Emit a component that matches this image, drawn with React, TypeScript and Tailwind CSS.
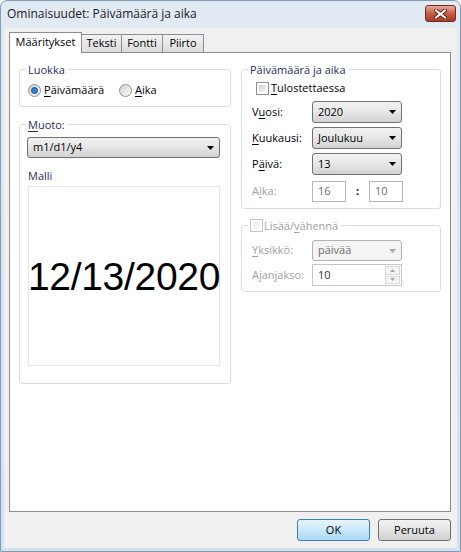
import React from 'react';

const U = ({ children }: { children: React.ReactNode }) => <span className="underline underline-offset-[2px]">{children}</span>;

const Radio = ({ checked }: { checked?: boolean }) => (
    <span className="w-[13px] h-[13px] rounded-full border border-[#8e8f8f] bg-linear-to-br from-[#d2d2d2] to-[#fcfcfc] flex items-center justify-center shrink-0">
        {checked && <span className="w-[7px] h-[7px] rounded-full border border-[#1b4f86] bg-[#2f86d8]" />}
    </span>
);

const Check = ({ disabled }: { disabled?: boolean }) => (
    disabled ? (
        <span className="w-[13px] h-[13px] border border-[#c4c4c4] bg-white p-[2px] shrink-0">
            <span className="block w-full h-full bg-linear-to-br from-[#ebebeb] to-[#fafafa]" />
        </span>
    ) : (
        <span className="w-[13px] h-[13px] border border-[#8e8f8f] bg-white p-[2px] shrink-0">
            <span className="block w-full h-full bg-linear-to-br from-[#cfcfcf] to-[#f7f7f7]" />
        </span>
    )
);

const Arrow = ({ color }: { color: string }) => (
    <svg width="7" height="4" viewBox="0 0 7 4" className="shrink-0">
        <polygon points="0,0 7,0 3.5,4" fill={color} />
    </svg>
);

const Combo = ({ value, className }: { value: string, className: string }) => (
    <div className={className + " flex items-center pl-[5px] pr-[5px] rounded-[3px] border border-[#707070] bg-linear-to-b from-[#f2f2f2] via-[#e6e6e6] to-[#d2d2d2]"}>
        <span className="flex-1">{value}</span>
        <Arrow color="#000" />
    </div>
);

const GroupBox = ({ legend, className, children }: { legend: React.ReactNode, className: string, children?: React.ReactNode }) => (
    <div className={className + " relative border border-[#d5dfe5] rounded-[3px]"}>
        <div className="absolute left-[6px] -top-[8px] bg-white px-[2px] leading-[15px] flex items-center">{legend}</div>
        {children}
    </div>
);

const DisabledInput = ({ value }: { value: string }) => (
    <div className="w-[34px] h-[21px] border border-[#b8b8b8] bg-white flex items-center pl-[5px] text-[#6d6d6d]">{value}</div>
);

const Row = ({ label, children, className }: { label: React.ReactNode, children: React.ReactNode, className: string }) => (
    <div className={className + " flex items-center"}>
        <div className="w-[60px]">{label}</div>
        {children}
    </div>
);

export default function App() {
    return (
        <div className="w-[461px] h-[552px] flex flex-col rounded-t-[7px] border border-[#7f9db9] bg-linear-to-b from-[#e2eaf3] to-[#d3e0ee] font-['Segoe_UI','Open_Sans',sans-serif] text-[11px] text-black">
            <div className="h-[27px] shrink-0 flex pl-[6px] pr-[4px]">
                <span className="text-[12px] leading-[26px] text-[#1b1b1b]">Ominaisuudet: Päivämäärä ja aika</span>
                <div className="ml-auto mt-[4px] w-[31px] h-[17px] rounded-[3px] border border-[#6f2b20] bg-linear-to-b from-[#e9a99a] via-[#c85c44] to-[#a83a22] flex items-center justify-center">
                    <svg width="13" height="10" viewBox="0 0 13 10">
                        <path d="M2 1.5 L11 8.5 M11 1.5 L2 8.5" stroke="#5a2418" strokeWidth="4" strokeLinecap="square" />
                        <path d="M2 1.5 L11 8.5 M11 1.5 L2 8.5" stroke="#fff" strokeWidth="2" strokeLinecap="square" />
                    </svg>
                </div>
            </div>
            <div className="flex-1 mx-[3px] mb-[3px] bg-[#f0f0f0] flex flex-col">
                <div className="flex items-end h-[24px] pl-[5px] pt-[4px]">
                    <div className="w-[73px] h-[21px] -mb-[1px] relative z-10 bg-white border border-b-0 border-[#898c95] flex items-center justify-center pb-[2px]">Määritykset</div>
                    <div className="w-[40px] h-[18px] border-t border-r border-[#898c95] bg-linear-to-b from-[#f2f2f2] to-[#dddddd] flex items-center justify-center">Teksti</div>
                    <div className="w-[41px] h-[18px] border-t border-r border-[#898c95] bg-linear-to-b from-[#f2f2f2] to-[#dddddd] flex items-center justify-center">Fontti</div>
                    <div className="w-[41px] h-[18px] border-t border-r border-[#898c95] bg-linear-to-b from-[#f2f2f2] to-[#dddddd] flex items-center justify-center">Piirto</div>
                </div>
                <div className="ml-[5px] w-[442px] h-[460px] border border-[#898c95] bg-white flex gap-[10px] pl-[9px] pt-[16px]">
                    <div className="w-[212px] flex flex-col">
                        <GroupBox className="h-[38px]" legend={<span className="text-[#1e2f57]">Luokka</span>}>
                            <div className="mt-[13px] pl-[8px] h-[15px] flex items-center">
                                <div className="w-[91px] flex items-center gap-[3px]">
                                    <Radio checked />
                                    <span><U>P</U>äivämäärä</span>
                                </div>
                                <div className="flex items-center gap-[3px]">
                                    <Radio />
                                    <span><U>A</U>ika</span>
                                </div>
                            </div>
                        </GroupBox>
                        <GroupBox className="mt-[17px] h-[260px]" legend={<span className="text-[#1e2f57]"><U>M</U>uoto:</span>}>
                            <Combo className="mt-[12px] ml-[7px] w-[193px] h-[21px]" value="m1/d1/y4" />
                            <div className="mt-[10px] ml-[8px] leading-[15px] text-[#1e2f57]">Malli</div>
                            <div className="mt-[3px] ml-[8px] w-[192px] h-[180px] border border-[#e3e7ec] flex items-center justify-center">
                                <span className="font-['Liberation_Sans',Arial,sans-serif] text-[39px] leading-none tracking-[-0.3px]">12/13/2020</span>
                            </div>
                        </GroupBox>
                    </div>
                    <div className="w-[200px] flex flex-col">
                        <GroupBox className="h-[140px]" legend={<span className="text-[#1e2f57]">Päivämäärä ja aika</span>}>
                            <div className="flex flex-col pl-[10px]">
                                <div className="mt-[12px] h-[13px] pl-[4px] flex items-center gap-[2px]">
                                    <Check />
                                    <span><U>T</U>ulostettaessa</span>
                                </div>
                                <Row className="mt-[6px] h-[22px]" label={<span>V<U>u</U>osi:</span>}>
                                    <Combo className="w-[90px] h-[22px]" value="2020" />
                                </Row>
                                <Row className="mt-[4px] h-[22px]" label={<span><U>K</U>uukausi:</span>}>
                                    <Combo className="w-[90px] h-[22px]" value="Joulukuu" />
                                </Row>
                                <Row className="mt-[4px] h-[22px]" label={<span>P<U>ä</U>ivä:</span>}>
                                    <Combo className="w-[90px] h-[22px]" value="13" />
                                </Row>
                                <Row className="mt-[6px] h-[21px]" label={<span className="text-[#a0a0a0]">A<U>i</U>ka:</span>}>
                                    <DisabledInput value="16" />
                                    <span className="w-[23px] text-center font-bold">:</span>
                                    <DisabledInput value="10" />
                                </Row>
                            </div>
                        </GroupBox>
                        <GroupBox className="mt-[16px] h-[67px]" legend={<span className="flex items-center gap-[1px] text-[#a0a0a0]"><Check disabled /><span>Lisää/<U>v</U>ähennä</span></span>}>
                            <div className="flex flex-col pl-[10px] text-[#a0a0a0]">
                                <Row className="mt-[14px] h-[21px]" label={<span><U>Y</U>ksikkö:</span>}>
                                    <div className="w-[90px] h-[21px] flex items-center pl-[5px] pr-[5px] rounded-[3px] border border-[#b0b4b8] bg-[#f4f4f4] text-[#6d6d6d]">
                                        <span className="flex-1">päivää</span>
                                        <Arrow color="#a6a6a6" />
                                    </div>
                                </Row>
                                <Row className="mt-[3px] h-[22px]" label={<span>Ajanjakso:</span>}>
                                    <div className="w-[90px] h-[22px] border border-[#c3c6cb] bg-white flex items-center text-[#303030]">
                                        <span className="flex-1 pl-[5px]">10</span>
                                        <div className="w-[17px] h-full flex flex-col p-[1px] gap-[1px]">
                                            <div className="flex-1 border border-[#d8d8d8] bg-[#f4f4f4] flex items-center justify-center">
                                                <svg width="5" height="3" viewBox="0 0 5 3"><polygon points="0,3 5,3 2.5,0" fill="#a6a6a6" /></svg>
                                            </div>
                                            <div className="flex-1 border border-[#d8d8d8] bg-[#f4f4f4] flex items-center justify-center">
                                                <svg width="5" height="3" viewBox="0 0 5 3"><polygon points="0,0 5,0 2.5,3" fill="#a6a6a6" /></svg>
                                            </div>
                                        </div>
                                    </div>
                                </Row>
                            </div>
                        </GroupBox>
                    </div>
                </div>
                <div className="mt-[7px] flex justify-end gap-[8px] pr-[6px]">
                    <button className="w-[73px] h-[22px] rounded-[3px] border border-[#3c7fb1] bg-linear-to-b from-[#e9f5fd] via-[#c9e8fb] to-[#a9daf6]">OK</button>
                    <button className="w-[73px] h-[22px] rounded-[3px] border border-[#707070] bg-linear-to-b from-[#f2f2f2] via-[#e4e4e4] to-[#d0d0d0]">Peruuta</button>
                </div>
            </div>
        </div>
    );
}
